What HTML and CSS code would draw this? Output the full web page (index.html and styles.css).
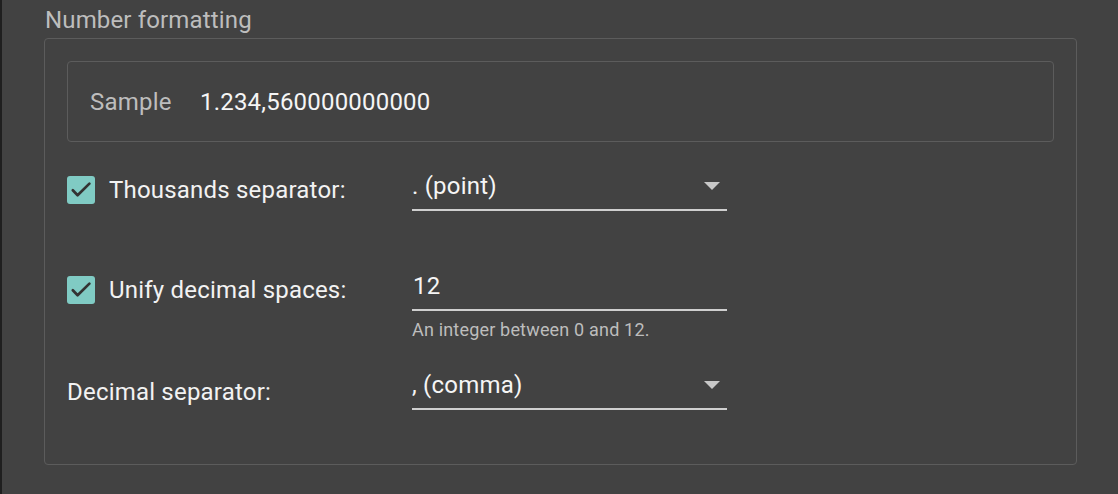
FILE: index.html
```html
<!DOCTYPE html>
<html>
<head>
<meta charset="utf-8">
<link rel="stylesheet" href="styles.css">
</head>
<body>
<div class="page">
  <div class="section-title">Number formatting</div>
  <div class="fieldset">
    <div class="sample">
      <span class="sample-label">Sample</span>
      <span class="sample-value">1.234,560000000000</span>
    </div>
    <div class="row row-first">
      <div class="label-cell">
        <span class="checkbox">
          <svg viewBox="0 0 28 28" width="28" height="28"><path d="M5.8 14.2 L10.6 19.2 L22.4 7.6" fill="none" stroke="#333333" stroke-width="2.7" stroke-linecap="round" stroke-linejoin="round"/></svg>
        </span>
        <span class="label">Thousands separator:</span>
      </div>
      <div class="control">
        <div class="select">
          <span class="value">. (point)</span>
          <span class="arrow"></span>
        </div>
      </div>
    </div>
    <div class="row row-second">
      <div class="label-cell">
        <span class="checkbox">
          <svg viewBox="0 0 28 28" width="28" height="28"><path d="M5.8 14.2 L10.6 19.2 L22.4 7.6" fill="none" stroke="#333333" stroke-width="2.7" stroke-linecap="round" stroke-linejoin="round"/></svg>
        </span>
        <span class="label">Unify decimal spaces:</span>
      </div>
      <div class="control">
        <div class="select input">
          <span class="value">12</span>
        </div>
        <div class="hint">An integer between 0 and 12.</div>
      </div>
    </div>
    <div class="row row-third">
      <div class="label-cell plain-cell">
        <span class="label">Decimal separator:</span>
      </div>
      <div class="control">
        <div class="select">
          <span class="value">, (comma)</span>
          <span class="arrow"></span>
        </div>
      </div>
    </div>
  </div>
</div>
</body>
</html>
```
FILE: styles.css
```css
html, body {
  margin: 0;
  padding: 0;
  background: #424242;
  font-family: Roboto, "Liberation Sans", sans-serif;
  color: #eeeeee;
}
body {
  border-left: 2px solid #1f1f1f;
  min-height: 494px;
  box-sizing: border-box;
}
.page {
  padding: 6px 0 0 42px;
  width: 1033px;
}
.section-title {
  font-size: 24px;
  line-height: 28px;
  letter-spacing: 0.15px;
  color: #bdbdbd;
  padding-left: 1px;
  margin-bottom: 4px;
}
.fieldset {
  border: 1px solid #5c5c5c;
  border-radius: 4px;
  height: 427px;
  box-sizing: border-box;
  padding: 22px 22px 0 22px;
}
.sample {
  border: 1px solid #5c5c5c;
  border-radius: 4px;
  height: 81px;
  box-sizing: border-box;
  display: flex;
  align-items: center;
  padding-left: 22px;
  font-size: 24px;
  letter-spacing: 0.2px;
}
.sample-label {
  color: #bdbdbd;
  width: 110px;
}
.sample-value {
  color: #f5f5f5;
}
.row {
  display: flex;
  align-items: flex-start;
}
.row-first { margin-top: 23px; }
.row-second { margin-top: 54px; }
.row-third { margin-top: 22px; }
.label-cell {
  width: 345px;
  display: flex;
  align-items: center;
  padding-top: 11px;
}
.plain-cell { padding-top: 14px; }
.checkbox {
  width: 28px;
  height: 28px;
  border-radius: 3px;
  background: #80cbc4;
  display: inline-flex;
  margin-right: 14px;
}
.label {
  font-size: 24px;
  line-height: 28px;
  letter-spacing: 0.2px;
  color: #f2f2f2;
}
.control {
  width: 315px;
}
.select {
  height: 46px;
  box-sizing: border-box;
  border-bottom: 2px solid #cfcfcf;
  display: flex;
  align-items: flex-start;
  justify-content: space-between;
  padding-top: 7px;
}
.value {
  font-size: 24px;
  line-height: 28px;
  letter-spacing: 0.2px;
  color: #f5f5f5;
}
.input .value { padding-left: 1px; }
.arrow {
  width: 0;
  height: 0;
  border-left: 8px solid transparent;
  border-right: 8px solid transparent;
  border-top: 8px solid #c8c8c8;
  margin-right: 7px;
  margin-top: 10px;
}
.hint {
  font-size: 18px;
  line-height: 24px;
  letter-spacing: 0.18px;
  color: #bdbdbd;
  margin-top: 7px;
}
```
